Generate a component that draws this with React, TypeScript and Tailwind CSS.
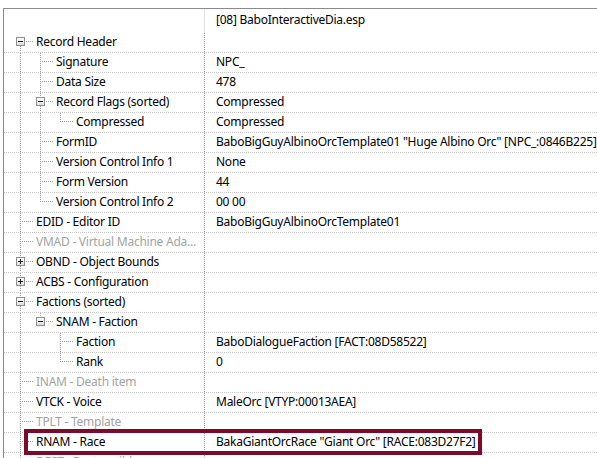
type Row = {
  label: string;
  value?: string;
  depth: number;
  box?: 'plus' | 'minus';
  gray?: boolean;
  mark?: boolean;
};

const rows: Row[] = [
  { label: 'Record Header', depth: 0, box: 'minus' },
  { label: 'Signature', depth: 1, value: 'NPC_' },
  { label: 'Data Size', depth: 1, value: '478' },
  { label: 'Record Flags (sorted)', depth: 1, box: 'minus', value: 'Compressed' },
  { label: 'Compressed', depth: 2, value: 'Compressed' },
  { label: 'FormID', depth: 1, value: 'BaboBigGuyAlbinoOrcTemplate01 "Huge Albino Orc" [NPC_:0846B225]' },
  { label: 'Version Control Info 1', depth: 1, value: 'None' },
  { label: 'Form Version', depth: 1, value: '44' },
  { label: 'Version Control Info 2', depth: 1, value: '00 00' },
  { label: 'EDID - Editor ID', depth: 0, value: 'BaboBigGuyAlbinoOrcTemplate01' },
  { label: 'VMAD - Virtual Machine Ada...', depth: 0, gray: true },
  { label: 'OBND - Object Bounds', depth: 0, box: 'plus' },
  { label: 'ACBS - Configuration', depth: 0, box: 'plus' },
  { label: 'Factions (sorted)', depth: 0, box: 'minus' },
  { label: 'SNAM - Faction', depth: 1, box: 'minus' },
  { label: 'Faction', depth: 2, value: 'BaboDialogueFaction [FACT:08D58522]' },
  { label: 'Rank', depth: 2, value: '0' },
  { label: 'INAM - Death item', depth: 0, gray: true },
  { label: 'VTCK - Voice', depth: 0, value: 'MaleOrc [VTYP:00013AEA]' },
  { label: 'TPLT - Template', depth: 0, gray: true },
  { label: 'RNAM - Race', depth: 0, value: 'BakaGiantOrcRace "Giant Orc" [RACE:083D27F2]', mark: true },
  { label: 'DEST - Destructible', depth: 0, gray: true },
];

// does the row at i have a later sibling (root list goes on past the screen)
function hasNext(i: number) {
  const d = rows[i].depth;
  for (let j = i + 1; j < rows.length; j++) {
    if (rows[j].depth < d) return false;
    if (rows[j].depth === d) return true;
  }
  return d === 0;
}

function guidesFor(i: number) {
  const out: boolean[] = [];
  for (let k = 0; k < rows[i].depth; k++) {
    let j = i - 1;
    while (j >= 0 && rows[j].depth !== k) j--;
    out.push(j >= 0 ? hasNext(j) : false);
  }
  return out;
}

const dot = { stroke: '#a0a0a0', strokeWidth: 1, strokeDasharray: '1 1', shapeRendering: 'crispEdges' as const };

function Guide({ on }: { on: boolean }) {
  return (
    <svg width={20} height={19} className="shrink-0">
      {on && <line x1={10.5} y1={0} x2={10.5} y2={19} {...dot} />}
    </svg>
  );
}

function Node({ box, first, next }: { box?: 'plus' | 'minus'; first: boolean; next: boolean }) {
  return (
    <svg width={26} height={19} className="shrink-0">
      <defs>
        <linearGradient id="bx" x1="0" y1="0" x2="0" y2="1">
          <stop offset="0" stopColor="#ffffff" />
          <stop offset="1" stopColor="#dcdcdc" />
        </linearGradient>
      </defs>
      {box ? (
        <>
          {!first && <line x1={10.5} y1={0} x2={10.5} y2={4} {...dot} />}
          {next && <line x1={10.5} y1={13} x2={10.5} y2={19} {...dot} />}
          <line x1={16} y1={8.5} x2={24} y2={8.5} {...dot} />
          <rect x={6.5} y={4.5} width={8} height={8} fill="url(#bx)" stroke="#8e8f8f" shapeRendering="crispEdges" />
          <line x1={8} y1={8.5} x2={13} y2={8.5} stroke="#1b1b1b" shapeRendering="crispEdges" />
          {box === 'plus' && <line x1={10.5} y1={6} x2={10.5} y2={11} stroke="#1b1b1b" shapeRendering="crispEdges" />}
        </>
      ) : (
        <>
          <line x1={10.5} y1={0} x2={10.5} y2={next ? 19 : 9} {...dot} />
          <line x1={12} y1={8.5} x2={24} y2={8.5} {...dot} />
        </>
      )}
    </svg>
  );
}

export default function App() {
  return (
    <div className="relative w-[597px] h-[458px] overflow-hidden bg-white pt-2 pl-[3px] font-['Noto_Sans',sans-serif] text-[12px] tracking-[-0.25px] text-black">
      <div className="border-l border-t border-[#8a8a8a] h-full">
        <div className="flex h-6">
          <div className="w-[201px] shrink-0 border-r border-[#e3e3e3]" />
          <div className="pl-[11px] leading-[21px] whitespace-nowrap">[08] BaboInteractiveDia.esp</div>
        </div>
        {rows.map((r, i) => {
          const guides = guidesFor(i);
          return (
            <div key={i} className="flex h-5 border-b border-dotted border-[#c8c8c8]">
              <div className="w-[201px] shrink-0 flex items-start pl-[6px] border-r border-dotted border-[#a0a0a0] overflow-hidden">
                {guides.map((g, k) => (
                  <Guide key={k} on={g} />
                ))}
                <Node box={r.box} first={i === 0} next={hasNext(i)} />
                <span className={`whitespace-nowrap leading-[18px] ${r.gray ? 'text-[#a3a3a3]' : ''}`}>{r.label}</span>
              </div>
              <div className="pl-[11px] whitespace-nowrap leading-[18px]">{r.value}</div>
            </div>
          );
        })}
      </div>
      <div className="absolute left-[24px] top-[429px] w-[458px] h-[26px] border-4 border-[#7b0b2b]" />
    </div>
  );
}
